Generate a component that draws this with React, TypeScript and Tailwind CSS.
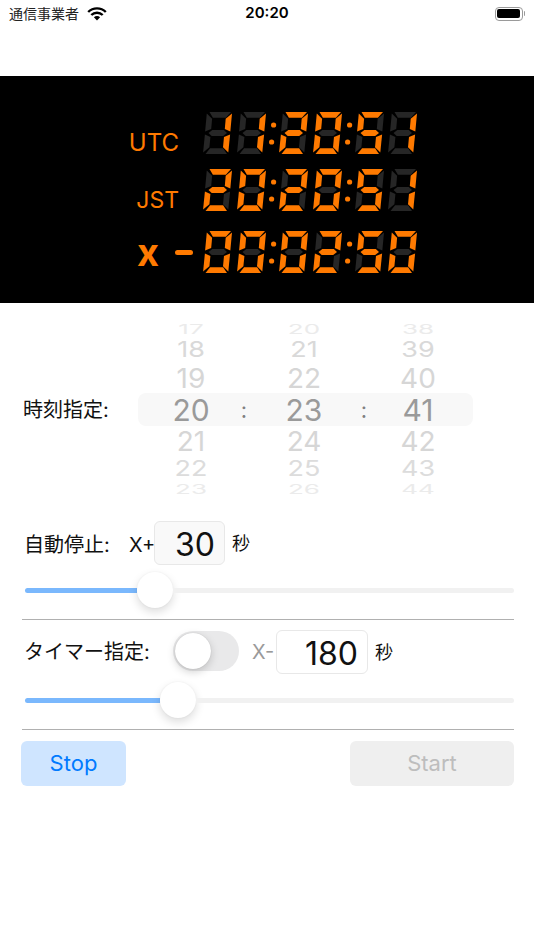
const SEGMENTS: Record<string, number[][]> = {
  a: [[2.5, 0], [24, 0], [19.5, 5.8], [6.5, 5.8]],
  b: [[25.2, 1.5], [25.2, 19.5], [19.4, 17], [19.4, 6.8]],
  c: [[25.2, 22.5], [25.2, 40.5], [19.4, 35.2], [19.4, 25]],
  d: [[2.5, 42], [24, 42], [19.5, 36.2], [6.5, 36.2]],
  e: [[0, 22.5], [0, 40.5], [5.8, 35.2], [5.8, 25]],
  f: [[0, 1.5], [0, 19.5], [5.8, 17], [5.8, 6.8]],
  g: [[3.5, 21], [7, 18], [18.5, 18], [22, 21], [18.5, 24], [7, 24]],
}

const DIGIT_SEGMENTS: Record<string, string> = {
  '0': 'abcdef',
  '1': 'bc',
  '2': 'abged',
  '5': 'afgcd',
}

const slant = (points: number[][]) =>
  points.map(([x, y]) => `${(x + (42 - y) * 0.095).toFixed(1)},${y}`).join(' ')

function Digit({ value }: { value: string }) {
  const lit = DIGIT_SEGMENTS[value]

  return (
    <svg width="29" height="42" viewBox="0 0 29 42" role="img" aria-label={value}>
      {Object.entries(SEGMENTS).map(([name, points]) => (
        <polygon key={name} points={slant(points)} fill={lit.includes(name) ? '#ff7a00' : '#262626'} />
      ))}
    </svg>
  )
}

function Colon() {
  return (
    <svg width="13" height="42" viewBox="0 0 13 42" aria-hidden="true">
      <circle cx="7.6" cy="13" r="2.6" fill="#ff7a00" />
      <circle cx="5.6" cy="30" r="2.6" fill="#ff7a00" />
    </svg>
  )
}

function Clock({ time }: { time: string }) {
  const [h, m, s] = time.split(':')

  return (
    <div className="ml-6 flex items-end">
      <div className="flex gap-[5px]">
        <Digit value={h[0]} />
        <Digit value={h[1]} />
      </div>
      <Colon />
      <div className="flex gap-[5px]">
        <Digit value={m[0]} />
        <Digit value={m[1]} />
      </div>
      <Colon />
      <div className="flex gap-[4px]">
        <Digit value={s[0]} />
        <Digit value={s[1]} />
      </div>
    </div>
  )
}

function WifiIcon() {
  return (
    <svg width="20" height="14" viewBox="0 0 20 14" aria-hidden="true">
      <path d="M1.2 5 A12.5 12.5 0 0 1 18.8 5" fill="none" stroke="#000" strokeWidth="2.4" />
      <path d="M4.3 8 A8.2 8.2 0 0 1 15.7 8" fill="none" stroke="#000" strokeWidth="2.4" />
      <path d="M6.9 10.2 A4.4 4.4 0 0 1 13.1 10.2 L10 13.6 Z" fill="#000" />
    </svg>
  )
}

function StatusBar() {
  return (
    <div className="grid h-[27px] grid-cols-[1fr_auto_1fr] items-center px-[9px]">
      <div className="flex items-center gap-2 text-[14px] text-[#222]">
        <span>通信事業者</span>
        <WifiIcon />
      </div>
      <span className="text-[15px] font-semibold text-black">20:20</span>
      <div className="flex items-center justify-end">
        <div className="flex h-[14px] w-[28px] rounded-[4px] border border-[#9a9a9a] p-[1.5px]">
          <div className="flex-1 rounded-[2px] bg-black" />
        </div>
        <div className="ml-[1px] h-[5px] w-[1.5px] rounded-r-full bg-[#9a9a9a]" />
      </div>
    </div>
  )
}

function Display() {
  return (
    <section className="mt-[49px] flex h-[227px] flex-col bg-black pt-9 text-[#ff7a00]">
      <div className="flex items-end">
        <span className="w-[179px] text-right text-[24px] leading-[22px]">UTC</span>
        <Clock time="11:20:51" />
      </div>
      <div className="mt-[15px] flex items-end">
        <span className="w-[179px] text-right text-[23px] leading-[22px]">JST</span>
        <Clock time="20:20:51" />
      </div>
      <div className="mt-5 flex items-center">
        <div className="flex w-[193px] items-center justify-end">
          <span className="text-[38px] font-bold leading-[42px]">x</span>
          <div className="ml-4 h-[5px] w-[18px] rounded-full bg-[#ff7a00]" />
        </div>
        <div className="-ml-[14px]">
          <Clock time="00:02:50" />
        </div>
      </div>
    </section>
  )
}

const WHEEL_ROWS = [
  { values: ['17', '20', '38'], rowClass: 'h-[14px] overflow-hidden', textClass: 'scale-y-[0.5] text-[#ebebeb] text-[26px]' },
  { values: ['18', '21', '39'], rowClass: 'h-[27px]', textClass: 'scale-y-[0.8] text-[#d9d9d9] text-[27px]' },
  { values: ['19', '22', '40'], rowClass: 'h-[30px]', textClass: 'scale-y-[0.95] text-[#d6d6d6] text-[28px]' },
  { values: ['20', '23', '41'], rowClass: 'h-[33px] rounded-lg bg-[#f8f8f8]', textClass: 'text-[#9a9a9a] text-[30px]', selected: true },
  { values: ['21', '24', '42'], rowClass: 'h-[29px]', textClass: 'scale-y-[0.95] text-[#d6d6d6] text-[28px]' },
  { values: ['22', '25', '43'], rowClass: 'h-[26px]', textClass: 'scale-y-[0.8] text-[#dcdcdc] text-[27px]' },
  { values: ['23', '26', '44'], rowClass: 'h-[15px] overflow-hidden', textClass: 'scale-y-[0.5] text-[#ebebeb] text-[26px]' },
]

function TimePicker() {
  return (
    <section className="mt-[19px] flex items-center pl-[23px]">
      <span className="w-[115px] pt-[2px] text-[20px] text-[#111]">時刻指定:</span>
      <div className="w-[335px]">
        {WHEEL_ROWS.map((row) => (
          <div key={row.values[0]} className={`flex items-center leading-none ${row.rowClass}`}>
            <span className={`w-[106px] text-center ${row.textClass}`}>{row.values[0]}</span>
            <span className="flex w-0 justify-center text-[22px] text-[#808080]">{row.selected ? ':' : ''}</span>
            <span className={`w-[120px] text-center ${row.textClass}`}>{row.values[1]}</span>
            <span className="flex w-0 justify-center text-[22px] text-[#808080]">{row.selected ? ':' : ''}</span>
            <span className={`w-[108px] text-center ${row.textClass}`}>{row.values[2]}</span>
          </div>
        ))}
      </div>
    </section>
  )
}

function Slider({ fill }: { fill: number }) {
  return (
    <div className="flex items-center pl-[25px] pr-5">
      <div className="h-[5px] rounded-l-full bg-[#7ab8fd]" style={{ width: fill }} />
      <div className="h-9 w-9 shrink-0 rounded-full bg-white shadow-[0_4px_10px_rgba(0,0,0,0.14),0_0_2px_rgba(0,0,0,0.06)]" />
      <div className="h-[5px] flex-1 rounded-r-full bg-[#f1f1f1]" />
    </div>
  )
}

function Divider() {
  return <div className="ml-[22px] mr-5 h-px bg-[#b0b0b0]" />
}

export default function App() {
  return (
    <div className="min-h-[950px] bg-white font-['Inter','Noto_Sans_CJK_JP',sans-serif]">
      <StatusBar />
      <Display />
      <TimePicker />

      <section className="mt-[25px] flex h-11 items-center pl-6 text-[#111]">
        <span className="w-[105px] pt-1 text-[20px]">自動停止:</span>
        <span className="w-[25px] pt-1 text-[20px]">X+</span>
        <div className="flex h-11 w-[71px] items-center justify-end rounded-md border border-[#e8e8e8] bg-[#f9f9f9] pr-[9px] pt-[3px] text-[32px]">
          30
        </div>
        <span className="ml-[7px] text-[18px]">秒</span>
      </section>

      <div className="mt-[7px]">
        <Slider fill={112} />
      </div>
      <div className="mt-[11px]">
        <Divider />
      </div>

      <section className="mt-[10px] flex h-[44px] items-center pl-6 text-[#111]">
        <span className="w-[149px] text-[20px]">タイマー指定:</span>
        <div className="-mt-[2px] flex h-10 w-[66px] items-center rounded-full bg-[#e9e9ea] p-[2px]">
          <div className="h-9 w-9 rounded-full bg-white shadow-[0_3px_8px_rgba(0,0,0,0.18),0_0_1px_rgba(0,0,0,0.2)]" />
        </div>
        <span className="ml-[13px] w-[24px] text-[20px] text-[#9a9a9a]">X-</span>
        <div className="flex h-11 w-[92px] items-center justify-end rounded-md border border-[#e8e8e8] bg-white pr-[9px] pt-[3px] text-[32px]">
          180
        </div>
        <span className="ml-[7px] text-[18px]">秒</span>
      </section>

      <div className="mt-2">
        <Slider fill={135} />
      </div>
      <div className="mt-[11px]">
        <Divider />
      </div>

      <div className="mt-[11px] flex justify-between pl-[21px] pr-5">
        <button type="button" className="h-[45px] w-[105px] rounded-md bg-[#cfe5ff] text-[22px] text-[#007aff]">
          Stop
        </button>
        <button type="button" className="h-[45px] w-[164px] rounded-md bg-[#efefef] text-[22px] text-[#bdbdbd]">
          Start
        </button>
      </div>
    </div>
  )
}
